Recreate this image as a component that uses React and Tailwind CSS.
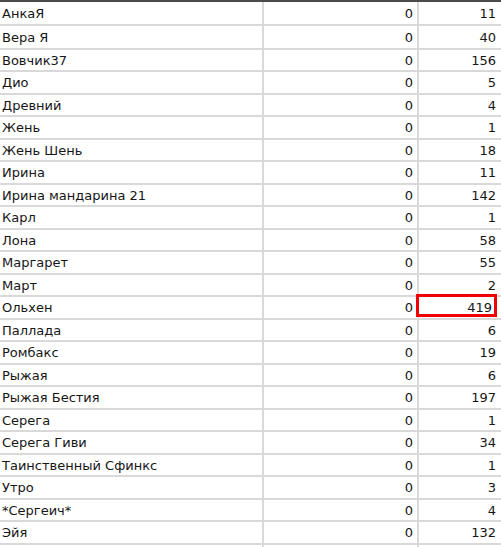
const rows = [
  ['АнкаЯ', 0, 11],
  ['Вера Я', 0, 40],
  ['Вовчик37', 0, 156],
  ['Дио', 0, 5],
  ['Древний', 0, 4],
  ['Жень', 0, 1],
  ['Жень Шень', 0, 18],
  ['Ирина', 0, 11],
  ['Ирина мандарина 21', 0, 142],
  ['Карл', 0, 1],
  ['Лона', 0, 58],
  ['Маргарет', 0, 55],
  ['Март', 0, 2],
  ['Ольхен', 0, 419],
  ['Паллада', 0, 6],
  ['Ромбакс', 0, 19],
  ['Рыжая', 0, 6],
  ['Рыжая Бестия', 0, 197],
  ['Серега', 0, 1],
  ['Серега Гиви', 0, 34],
  ['Таинственный Сфинкс', 0, 1],
  ['Утро', 0, 3],
  ['*Сергеич*', 0, 4],
  ['Эйя', 0, 132],
];

export default function App() {
  return (
    <div
      className="w-[501px] h-[547px] overflow-hidden bg-white flex flex-col text-[13px] text-[#161616]"
      style={{ fontFamily: '"DejaVu Sans", Verdana, sans-serif' }}
    >
      {/* bottom of the header row */}
      <div className="h-[2px] shrink-0 bg-[#4a4a4a]" />
      {rows.map(([name, a, b], i) => (
        <div
          key={name}
          className={
            'grid grid-cols-[264px_155px_1fr] shrink-0 ' +
            (i === 0 ? 'h-[24px]' : 'h-[22.5px]')
          }
        >
          <div className="flex items-center pl-[2px] pt-[2px] border-b-2 border-r-2 border-[#d9d9d9] whitespace-nowrap">
            {name}
          </div>
          <div className="flex items-center justify-end pr-[4px] pt-[2px] border-b-2 border-r-2 border-[#d9d9d9]">
            {a}
          </div>
          <div
            className={
              'relative flex items-center justify-end pt-[2px] border-b-2 border-[#d9d9d9] ' +
              (name === 'Ольхен' ? 'pr-[9px]' : 'pr-[5px]')
            }
          >
            {b}
            {name === 'Ольхен' && (
              <div className="absolute -top-[2px] -left-[3px] right-[4px] bottom-[1px] border-[3px] border-[#f00000]" />
            )}
          </div>
        </div>
      ))}
      <div className="grid grid-cols-[264px_155px_1fr] flex-1">
        <div className="border-r-2 border-[#d9d9d9]" />
        <div className="border-r-2 border-[#d9d9d9]" />
        <div />
      </div>
    </div>
  );
}
